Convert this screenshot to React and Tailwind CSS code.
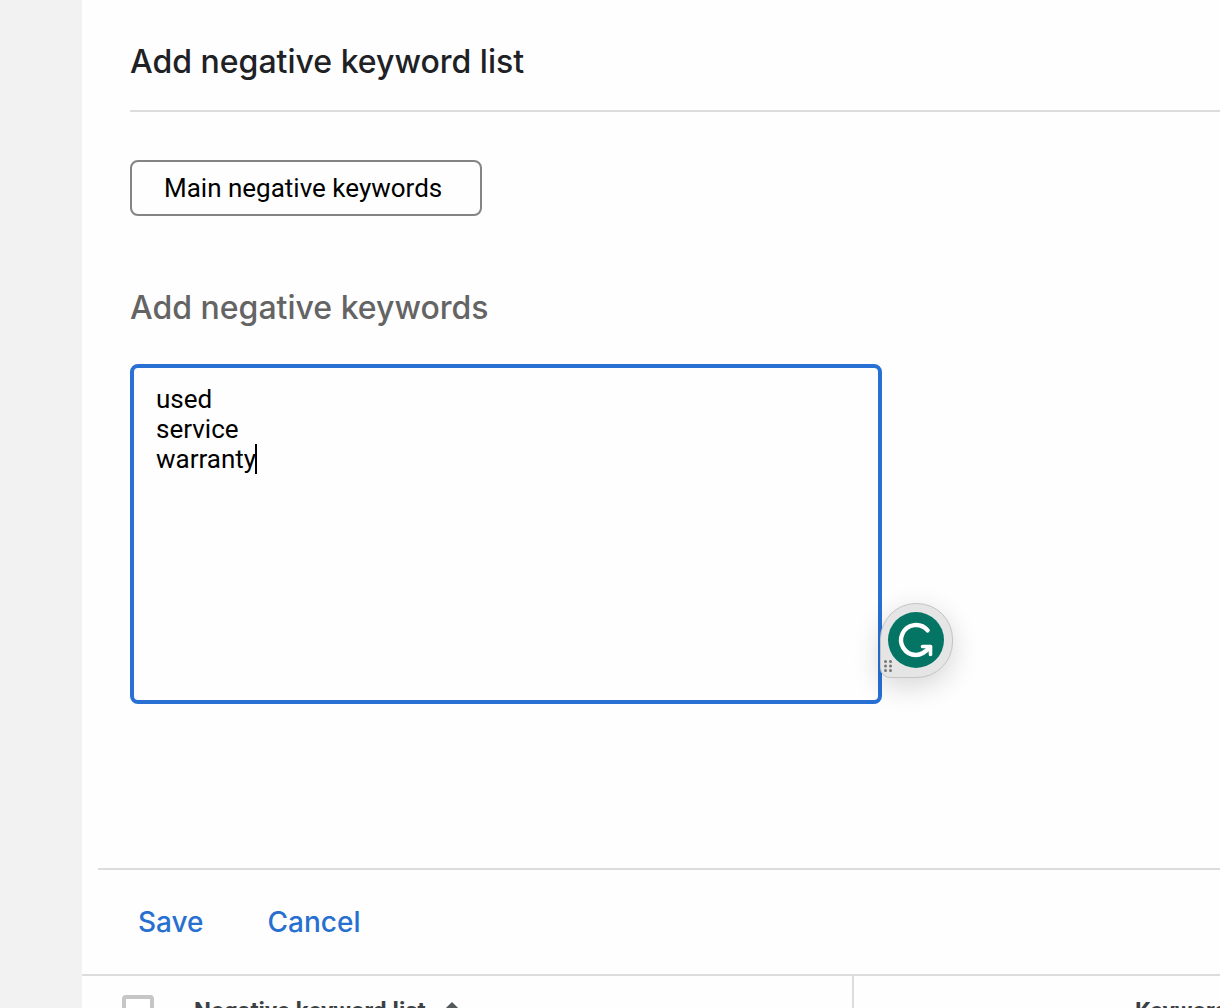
import { useState } from "react";

function WritingAssistant() {
  return (
    <button
      type="button"
      aria-label="Open writing assistant"
      className="absolute -right-[71px] bottom-[26px] h-[75px] w-[73px] rounded-t-[36px] rounded-br-[36px] rounded-bl-[10px] border border-[#c4c4c4] bg-[#e5e5e5] shadow-[0_8px_28px_rgba(0,0,0,0.16)]"
    >
      <svg viewBox="0 0 73 75" className="absolute -left-px -top-px h-[75px] w-[73px]" aria-hidden="true">
        <circle cx="36" cy="37" r="28" fill="#047564" />
        <g fill="none" stroke="#fff" strokeLinecap="round" strokeLinejoin="round">
          <path d="M47.6 27.4 A15 15 0 1 0 36 52 C42 52 46 48.500 50 44" strokeWidth="4.400" />
          <path d="M42.500 43.500 H50.500 V51.500" strokeWidth="3.600" />
        </g>
        <g fill="#777">
          <circle cx="5.500" cy="58.500" r="1.500" />
          <circle cx="10.500" cy="58.500" r="1.500" />
          <circle cx="5.500" cy="63" r="1.500" />
          <circle cx="10.500" cy="63" r="1.500" />
          <circle cx="5.500" cy="67.500" r="1.500" />
          <circle cx="10.500" cy="67.500" r="1.500" />
        </g>
      </svg>
    </button>
  );
}

export default function App() {
  const [name, setName] = useState("Main negative keywords");
  const [keywords, setKeywords] = useState("used\nservice\nwarranty");

  return (
    <div className="flex h-screen overflow-hidden bg-[#f2f2f2] pl-[82px] font-['Roboto',sans-serif]">
      <main className="min-w-0 flex-1 bg-[#fefefe]">
        <form onSubmit={(e) => e.preventDefault()}>
          <div className="pl-12">
            <header className="border-b-2 border-[#dcdcdc] pb-[26px] pt-10">
              <h1 className="font-['Inter',sans-serif] text-[32px] font-medium leading-[44px] text-[#202124]">
                Add negative keyword list
              </h1>
            </header>
            <input
              type="text"
              aria-label="List name"
              value={name}
              onChange={(e) => setName(e.target.value)}
              className="mt-12 block h-14 w-[352px] rounded-lg border-2 border-[#848484] bg-transparent px-8 text-[26px] text-black outline-none"
            />
            <label
              htmlFor="keywords"
              className="mt-[70px] block font-['Inter',sans-serif] text-[32px] font-medium leading-[44px] text-[#646464]"
            >
              Add negative keywords
            </label>
            <div className="relative mt-[34px] h-[340px] w-[752px]">
              <textarea
                id="keywords"
                value={keywords}
                spellCheck={false}
                onChange={(e) => setKeywords(e.target.value)}
                className="block h-full w-full resize-none rounded-lg border-4 border-[#2870d4] bg-transparent px-[22px] py-4 text-[26px] leading-[30px] text-black outline-none"
              />
              <span aria-hidden="true" className="absolute left-[125px] top-20 h-[30px] w-0.5 bg-black" />
              <WritingAssistant />
            </div>
          </div>
          <div className="ml-4 mt-[164px] flex gap-16 border-t-2 border-[#dcdcdc] px-10 py-8 font-['Inter',sans-serif] text-[28px] font-medium leading-10 text-[#2870d0]">
            <button type="submit">Save</button>
            <button type="button">Cancel</button>
          </div>
        </form>
        <table className="w-full table-fixed border-t-2 border-[#dcdcdc] text-2xl font-bold text-[#3c4043]">
          <thead>
            <tr className="h-[70px]">
              <th className="w-28 pl-10 text-left">
                <input
                  type="checkbox"
                  aria-label="Select all lists"
                  className="block size-8 appearance-none rounded border-4 border-[#c6c6c6] bg-white"
                />
              </th>
              <th className="w-[659px] border-r-2 border-[#dcdcdc] text-left">
                <button type="button" className="flex items-center gap-4">
                  Negative keyword list
                  <svg viewBox="0 0 20 20" className="size-5" fill="none" stroke="#55585b" strokeWidth="3" aria-hidden="true">
                    <path d="M10 19 V4 M2 11 L10 3 L18 11" />
                  </svg>
                </button>
              </th>
              <th className="whitespace-nowrap pl-[281px] text-left">Keywords</th>
            </tr>
          </thead>
        </table>
      </main>
    </div>
  );
}
